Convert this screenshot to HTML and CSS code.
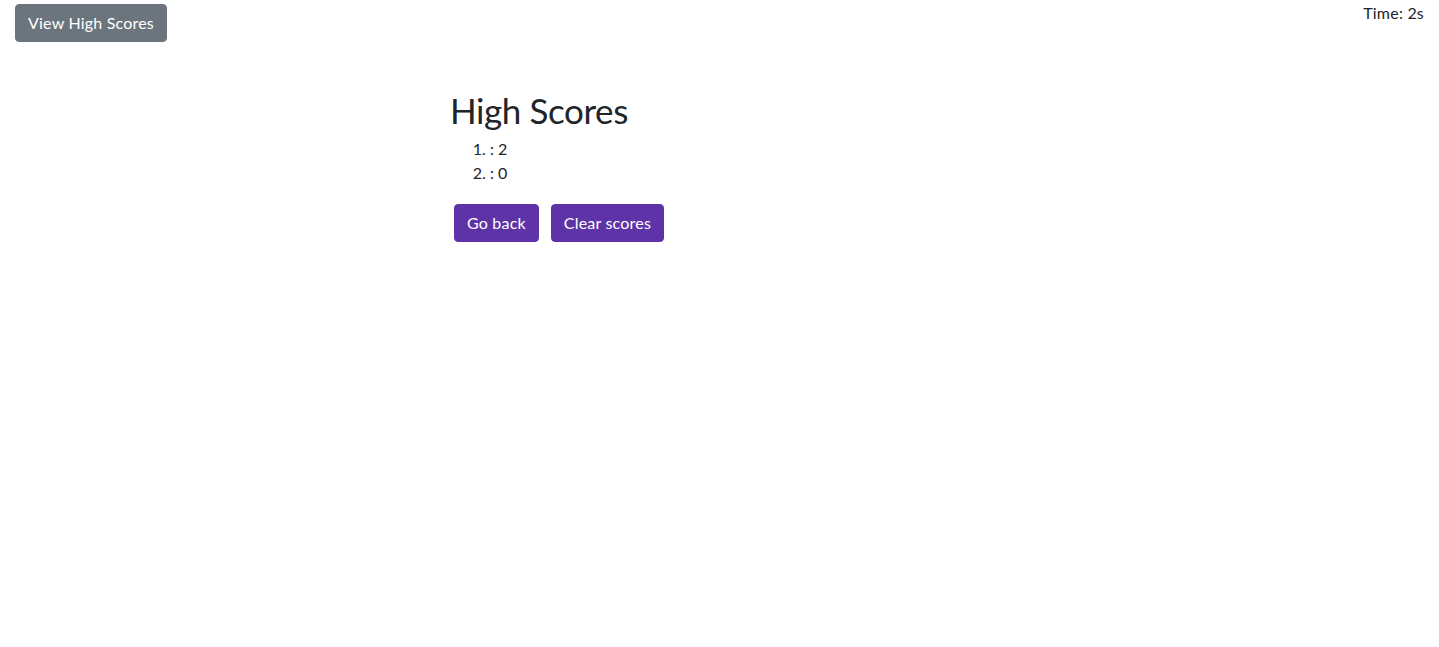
FILE: index.html
```html
<!DOCTYPE html>
<html lang="en">
<head>
<meta charset="utf-8">
<title>High Scores</title>
<link rel="stylesheet" href="styles.css">
</head>
<body>
<header class="topbar">
  <button class="btn btn-secondary">View High Scores</button>
  <div class="timer">Time: 2s</div>
</header>
<main class="content">
  <section class="scores">
    <h1 class="title">High Scores</h1>
    <ol class="score-list">
      <li>: 2</li>
      <li>: 0</li>
    </ol>
    <div class="actions">
      <button class="btn btn-primary">Go back</button>
      <button class="btn btn-primary">Clear scores</button>
    </div>
  </section>
</main>
</body>
</html>
```
FILE: styles.css
```css
* { box-sizing: border-box; }
body {
  margin: 0;
  font-family: "Lato", "Open Sans", sans-serif;
  font-size: 16px;
  line-height: 24px;
  color: #212529;
  background: #fff;
}
.topbar {
  display: flex;
  justify-content: space-between;
  align-items: flex-start;
  padding: 4px 15px 0 15px;
}
.timer {
  margin-top: -3px;
  letter-spacing: 0.2px;
}
.btn {
  font-family: inherit;
  font-size: 16px;
  line-height: 24px;
  padding: 6px 12px;
  border: 1px solid transparent;
  border-radius: 4px;
  color: #fff;
  cursor: pointer;
  letter-spacing: 0.2px;
}
.btn-secondary { background: #6c757d; border-color: #6c757d; }
.btn-primary { background: #5e33a7; border-color: #5e33a7; }
.content {
  padding-left: 450px;
  padding-top: 44px;
}
.title {
  margin: 0 0 3px 0;
  font-size: 35px;
  line-height: 48px;
  font-weight: 400;
  letter-spacing: -0.4px;
}
.score-list {
  margin: 0 0 19px 0;
  padding-left: 40px;
}
.actions {
  display: flex;
  gap: 12px;
  padding-left: 4px;
}
```
